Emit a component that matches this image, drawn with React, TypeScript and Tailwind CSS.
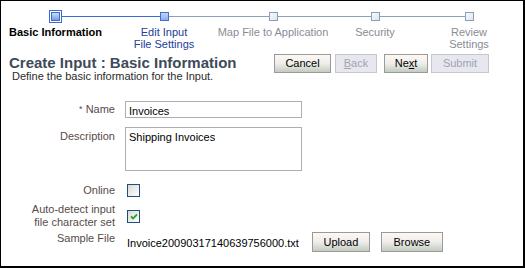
import React from 'react';
import clsx from 'clsx';

type StepState = 'current' | 'visited' | 'disabled';

interface Step {
  label: string[];
  width: string;
  state: StepState;
  leftLine?: string;
  rightLine?: string;
}

const BLUE = 'bg-[#3b6cd6]';
const GRAY = 'bg-[#8e9ebf]';

const steps: Step[] = [
  { label: ['Basic Information'], width: 'w-[109px]', state: 'current', rightLine: BLUE },
  { label: ['Edit Input', 'File Settings'], width: 'w-[108px]', state: 'visited', leftLine: BLUE, rightLine: GRAY },
  { label: ['Map File to Application'], width: 'w-[110px]', state: 'disabled', leftLine: GRAY, rightLine: GRAY },
  { label: ['Security'], width: 'w-[94px]', state: 'disabled', leftLine: GRAY, rightLine: GRAY },
  { label: ['Review', 'Settings'], width: 'w-[94px]', state: 'disabled', leftLine: GRAY },
];

function StepIcon({ state }: { state: StepState }) {
  if (state === 'current') {
    return (
      <div className="w-[13px] h-[13px] shrink-0 border border-[#3a6ad2] bg-white p-px">
        <div className="w-full h-full border border-[#3a6ad2] bg-linear-to-b from-[#cddcf5] to-[#7c9ddb]" />
      </div>
    );
  }
  if (state === 'visited') {
    return <div className="w-[9px] h-[9px] shrink-0 border border-[#3f6ed4] bg-linear-to-b from-[#c2d4f4] to-[#90aee6]" />;
  }
  return <div className="w-[9px] h-[9px] shrink-0 border border-[#8d9dbd] bg-linear-to-br from-[#f6fafa] to-[#dde8ea]" />;
}

function Train() {
  return (
    <div className="flex pt-[9px]">
      {steps.map((s, i) => (
        <div key={i} className={clsx('flex flex-col shrink-0', s.width)}>
          <div className="flex items-center h-[13px]">
            <div className={clsx('flex-1 h-px', s.leftLine)} />
            <StepIcon state={s.state} />
            <div className={clsx('flex-1 h-px', s.rightLine)} />
          </div>
          <div
            className={clsx(
              'mt-[3px] flex flex-col items-center text-[11px] leading-[12px] whitespace-nowrap',
              s.state === 'current' && 'font-bold text-black',
              s.state === 'visited' && 'text-[#22409a]',
              s.state === 'disabled' && 'text-[#8b8b95]'
            )}
          >
            {s.label.map((l) => (
              <span key={l}>{l}</span>
            ))}
          </div>
        </div>
      ))}
    </div>
  );
}

function Button({ children, disabled, className }: { children: React.ReactNode; disabled?: boolean; className?: string }) {
  return (
    <div
      className={clsx(
        'flex items-center justify-center border text-[11px] leading-[13px]',
        disabled
          ? 'border-[#c6c6cd] bg-[#e7e7ef] text-[#a3a3ae]'
          : 'border-[#9a9a9a] bg-linear-to-b from-[#fff7f0] via-[#eeeeec] to-[#c3ccbf] text-black',
        className
      )}
    >
      {children}
    </div>
  );
}

function Checkbox({ checked }: { checked?: boolean }) {
  return (
    <div className="ml-[2px] w-[13px] h-[13px] border border-[#1c4f7e] bg-linear-to-br from-[#d9d9d4] to-white flex items-center justify-center">
      {checked && (
        <svg width="8" height="7" viewBox="0 0 8 7">
          <path d="M1 3.4 L3.1 5.5 L7 1.4" fill="none" stroke="#21a121" strokeWidth="1.8" />
        </svg>
      )}
    </div>
  );
}

const labelCls = 'w-[114px] shrink-0 text-right text-[11px] leading-[13px] text-[#574c48]';

export default function App() {
  return (
    <div className="w-[525px] h-[268px] bg-white border-black border-t border-l border-r-2 border-b-2 font-['Liberation_Sans',Arial,sans-serif] overflow-hidden">
      <Train />

      <div className="flex items-start justify-between mt-[4px] pr-[34px]">
        <div className="flex flex-col pt-px">
          <h1 className="ml-[8px] text-[15px] leading-[15px] font-bold text-[#3e4a5a]">Create Input : Basic Information</h1>
          <p className="ml-[11px] text-[11px] leading-[13px] text-[#2b2b2b]">Define the basic information for the Input.</p>
        </div>
        <div className="flex h-[19px]">
          <Button className="w-[57px]">Cancel</Button>
          <Button disabled className="ml-[4px] w-[42px]">
            <span className="underline">B</span>ack
          </Button>
          <Button className="ml-[7px] w-[44px]">
            Ne<span className="underline">x</span>t
          </Button>
          <Button disabled className="ml-[3px] w-[58px]">Submit</Button>
        </div>
      </div>

      <div className="flex flex-col mt-[18px]">
        <div className="flex items-start">
          <div className={clsx(labelCls, 'pt-[2px]')}>
            <span className="text-[9px] relative -top-[1px]">*</span> Name
          </div>
          <div className="ml-[10px] w-[177px] h-[17px] border border-[#abadb3] pl-[3px] pt-[3px] text-[11px] leading-[13px] text-black">
            Invoices
          </div>
        </div>

        <div className="flex items-start mt-[9px]">
          <div className={clsx(labelCls, 'pt-[3px]')}>Description</div>
          <div className="ml-[10px] w-[177px] h-[44px] border border-[#abadb3] pl-[3px] pt-[3px] text-[11px] leading-[13px] text-black">
            Shipping Invoices
          </div>
        </div>

        <div className="flex items-center mt-[12px]">
          <div className={clsx(labelCls, 'pt-px')}>Online</div>
          <div className="ml-[10px]">
            <Checkbox />
          </div>
        </div>

        <div className="flex items-center mt-[6px]">
          <div className={labelCls}>
            Auto-detect input
            <br />
            file character set
          </div>
          <div className="ml-[10px]">
            <Checkbox checked />
          </div>
        </div>

        <div className="flex items-start mt-[3px]">
          <div className={labelCls}>Sample File</div>
          <div className="ml-[12px] flex items-center h-[20px]">
            <span className="mt-[2px] text-[11px] leading-[13px] text-black">Invoice20090317140639756000.txt</span>
            <Button className="ml-[13px] w-[58px] h-[20px]">Upload</Button>
            <Button className="ml-[11px] w-[62px] h-[20px]">Browse</Button>
          </div>
        </div>
      </div>
    </div>
  );
}
